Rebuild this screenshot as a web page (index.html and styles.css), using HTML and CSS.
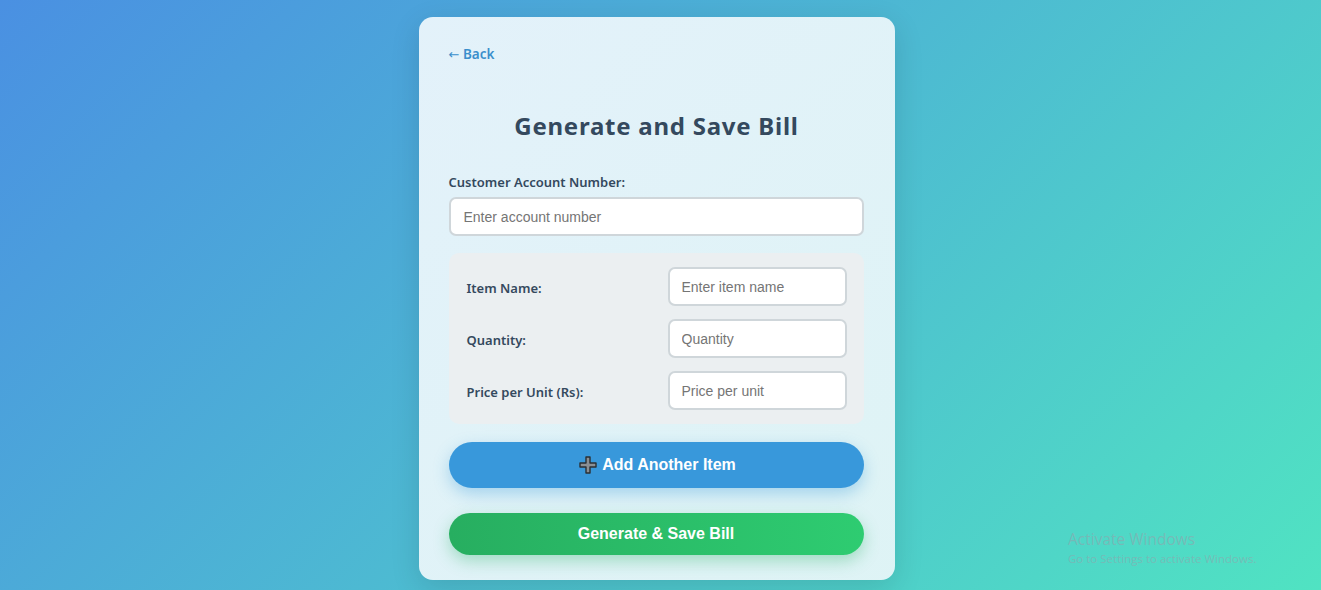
FILE: index.html
```html
<!DOCTYPE html>
<html lang="en">
<head>
<meta charset="utf-8">
<title>Generate and Save Bill</title>
<link rel="stylesheet" href="styles.css">
</head>
<body>
<div class="page">
  <div class="card">
    <a class="back" href="#"><span class="arrow">←</span> Back</a>
    <h1 class="title">Generate and Save Bill</h1>
    <label class="label" for="acc">Customer Account Number:</label>
    <input class="input wide" id="acc" type="text" placeholder="Enter account number">
    <div class="items">
      <div class="row">
        <span class="row-label">Item Name:</span>
        <input class="input small" type="text" placeholder="Enter item name">
      </div>
      <div class="row">
        <span class="row-label">Quantity:</span>
        <input class="input small" type="text" placeholder="Quantity">
      </div>
      <div class="row">
        <span class="row-label">Price per Unit (Rs):</span>
        <input class="input small" type="text" placeholder="Price per unit">
      </div>
    </div>
    <button class="btn btn-add" type="button">
      <svg class="plus" viewBox="0 0 20 20" width="20" height="20"><path d="M8 2h4v6h6v4h-6v6H8v-6H2V8h6z" fill="#8a8f94" stroke="#2b2f33" stroke-width="1.4" stroke-linejoin="round"/></svg>
      Add Another Item
    </button>
    <button class="btn btn-save" type="button">Generate &amp; Save Bill</button>
  </div>
</div>
<div class="activate">
  <div class="act-title">Activate Windows</div>
  <div class="act-sub">Go to Settings to activate Windows.</div>
</div>
</body>
</html>
```
FILE: styles.css
```css
* { box-sizing: border-box; }
html, body { margin: 0; padding: 0; height: 100%; }
body {
  background: linear-gradient(135deg, #4a90e2 0%, #50e3c2 100%);
  font-family: "Noto Sans", "Open Sans", sans-serif;
  overflow: hidden;
}
.page {
  display: flex;
  justify-content: center;
  padding-top: 17px;
  margin-left: -8px;
}
.card {
  width: 476px;
  height: 563px;
  background: linear-gradient(135deg, rgba(232,244,251,0.97), rgba(228,245,247,0.96));
  border-radius: 14px;
  padding: 26px 30px 0 30px;
  display: flex;
  flex-direction: column;
  box-shadow: 0 8px 30px rgba(0,0,0,0.12);
}
.back {
  align-self: flex-start;
  color: #3a8fcc;
  font-size: 13.5px;
  font-weight: 600;
  text-decoration: none;
  line-height: 20px;
  margin-top: 1px;
}
.arrow {
  font-family: "DejaVu Sans", sans-serif;
  font-weight: 400;
  font-size: 13px;
}
.title {
  margin: 45px 0 0 0;
  text-align: center;
  font-size: 24px;
  font-weight: 700;
  letter-spacing: 0.75px;
  color: #34495e;
  line-height: 32px;
}
.label {
  margin-top: 30px;
  font-size: 13px;
  font-weight: 600;
  color: #34495e;
  line-height: 20px;
}
.input {
  font-family: "Liberation Sans", Arial, sans-serif;
  font-size: 14px;
  color: #333;
  background: #fff;
  border: 2px solid #cfd6da;
  border-radius: 7px;
  height: 39px;
  padding: 0 12px;
  outline: none;
}
.input::placeholder { color: #757575; }
.wide {
  margin-top: 5px;
  width: 415px;
  padding-left: 13px;
}
.items {
  margin-top: 17px;
  width: 415px;
  background: #ebeff1;
  border-radius: 10px;
  padding: 14px 17px 14px 18px;
  display: flex;
  flex-direction: column;
  gap: 13px;
}
.row {
  display: flex;
  align-items: center;
  justify-content: space-between;
}
.row-label {
  font-size: 13px;
  font-weight: 600;
  color: #34495e;
  padding-top: 2px;
}
.small { width: 179px; }
.btn {
  border: none;
  width: 415px;
  color: #fff;
  font-family: "Liberation Sans", Arial, sans-serif;
  font-size: 16px;
  font-weight: 700;
  display: flex;
  align-items: center;
  justify-content: center;
  gap: 4px;
  cursor: pointer;
}
.btn-add {
  margin-top: 18px;
  height: 46px;
  border-radius: 23px;
  background: #3898db;
  box-shadow: 0 6px 16px rgba(52,152,219,0.35);
}
.plus { margin-top: -1px; margin-left: 2px; }
.btn-save {
  margin-top: 25px;
  height: 42px;
  border-radius: 21px;
  background: linear-gradient(90deg, #27ae60, #2ecc71);
  box-shadow: 0 6px 16px rgba(39,174,96,0.35);
}
.activate {
  position: absolute;
  left: 1068px;
  top: 529px;
  color: rgba(150,160,170,0.55);
  font-family: "Open Sans", "Noto Sans", sans-serif;
  pointer-events: none;
}
.act-title { font-size: 15.5px; line-height: 20px; }
.act-sub { font-size: 11.5px; line-height: 20px; }
```
